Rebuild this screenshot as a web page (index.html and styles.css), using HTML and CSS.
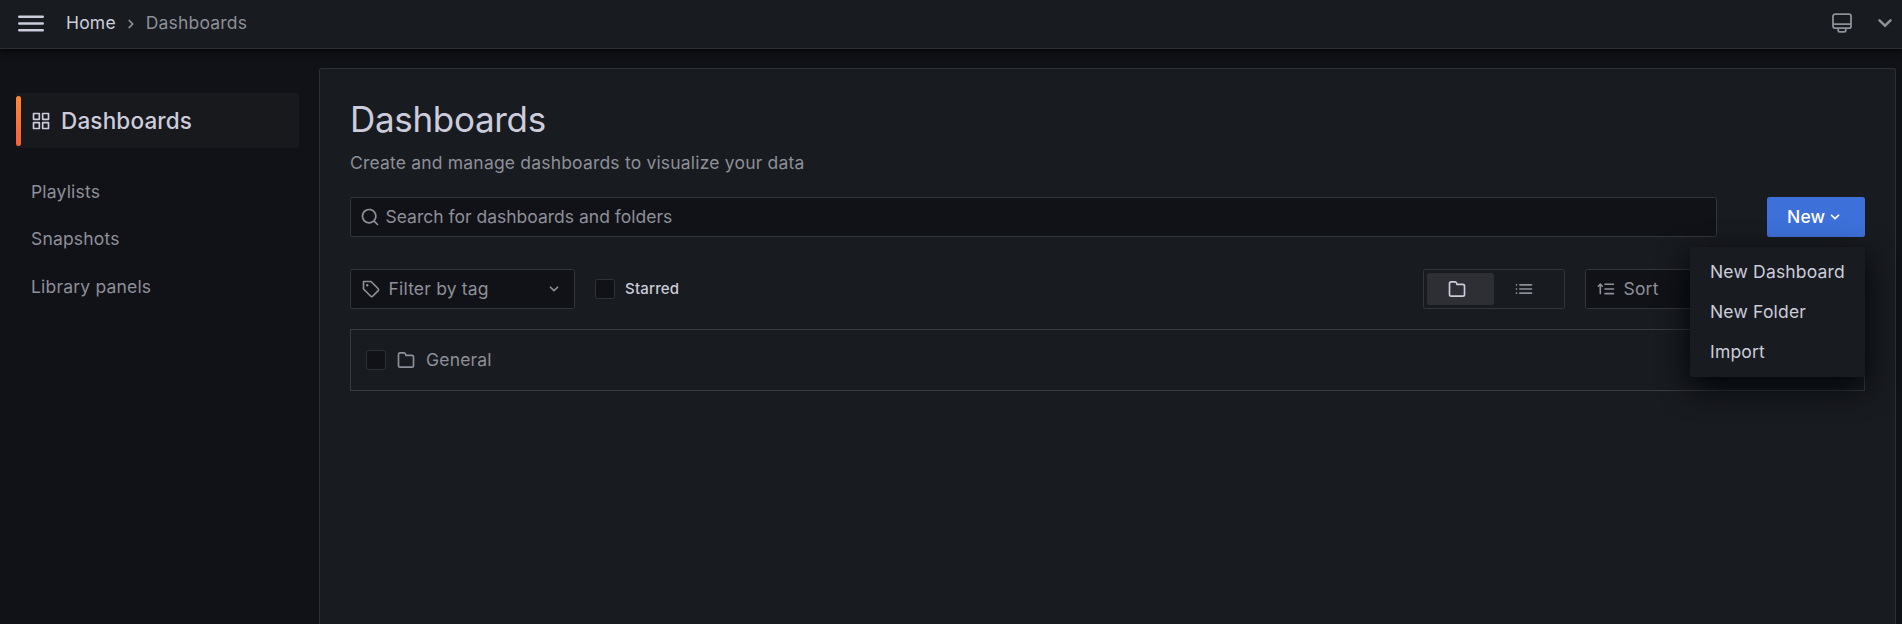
FILE: index.html
```html
<!DOCTYPE html>
<html lang="en">
<head>
<meta charset="utf-8">
<title>Dashboards</title>
<link rel="stylesheet" href="styles.css">
</head>
<body>
<svg class="sprite" aria-hidden="true">
  <symbol id="folder" viewBox="0 0 24 24"><path d="M19,5.5H12.72l-.32-1a3,3,0,0,0-2.84-2H5a3,3,0,0,0-3,3v13a3,3,0,0,0,3,3H19a3,3,0,0,0,3-3V8.5A3,3,0,0,0,19,5.5Zm1,13a1,1,0,0,1-1,1H5a1,1,0,0,1-1-1V5.5a1,1,0,0,1,1-1H9.56a1,1,0,0,1,.95.68l.54,1.64A1,1,0,0,0,12,7.5h7a1,1,0,0,1,1,1Z"/></symbol>
  <symbol id="angle-down" viewBox="0 0 24 24"><path d="M17,9.17a1,1,0,0,0-1.41,0L12,12.71,8.46,9.17a1,1,0,0,0-1.41,0,1,1,0,0,0,0,1.42l4.24,4.24a1,1,0,0,0,1.42,0L17,10.59A1,1,0,0,0,17,9.17Z"/></symbol>
</svg>
<header class="topbar">
  <svg class="menu-icon" viewBox="0 0 26 17"><path d="M1.2 1.8H24.8M1.2 8.5H24.8M1.2 15.2H24.8"/></svg>
  <nav class="crumbs">
    <a class="crumb-home">Home</a>
    <svg class="icon crumb-sep" viewBox="0 0 24 24"><path d="M14.83,11.29,10.59,7.05a1,1,0,0,0-1.42,0,1,1,0,0,0,0,1.41L12.71,12,9.17,15.54a1,1,0,0,0,0,1.41,1,1,0,0,0,.71.29,1,1,0,0,0,.71-.29l4.24-4.24A1,1,0,0,0,14.83,11.29Z"/></svg>
    <span>Dashboards</span>
  </nav>
  <div class="top-actions">
    <svg class="icon monitor" viewBox="0 0 20 20"><path d="M3 1.2h14a2 2 0 0 1 2 2v10a2 2 0 0 1-2 2H3a2 2 0 0 1-2-2v-10a2 2 0 0 1 2-2ZM1 11.2h18M6.2 15.2v2a1.600 1.600 0 0 0 1.600 1.600h4.400a1.600 1.600 0 0 0 1.600-1.600v-2"/></svg>
    <svg class="icon top-chevron" viewBox="0 0 14 10"><path d="M1.500 2.300L7 7.700L12.500 2.300"/></svg>
  </div>
</header>
<div class="body">
  <aside class="sidebar">
    <a class="side-active">
      <svg class="icon" viewBox="0 0 24 24"><path d="M10,13H3a1,1,0,0,0-1,1v7a1,1,0,0,0,1,1h7a1,1,0,0,0,1-1V14A1,1,0,0,0,10,13ZM9,20H4V15H9ZM21,2H14a1,1,0,0,0-1,1v7a1,1,0,0,0,1,1h7a1,1,0,0,0,1-1V3A1,1,0,0,0,21,2ZM20,9H15V4h5Zm1,4H14a1,1,0,0,0-1,1v7a1,1,0,0,0,1,1h7a1,1,0,0,0,1-1V14A1,1,0,0,0,21,13Zm-1,7H15V15h5ZM10,2H3A1,1,0,0,0,2,3v7a1,1,0,0,0,1,1h7a1,1,0,0,0,1-1V3A1,1,0,0,0,10,2ZM9,9H4V4H9Z"/></svg>
      <span>Dashboards</span>
    </a>
    <ul class="side-links">
      <li>Playlists</li>
      <li>Snapshots</li>
      <li>Library panels</li>
    </ul>
  </aside>
  <main class="panel">
    <h1>Dashboards</h1>
    <p class="subtitle">Create and manage dashboards to visualize your data</p>
    <div class="search-row">
      <div class="field search">
        <svg class="icon" viewBox="0 0 24 24"><path d="M21.71,20.29,18,16.61A9,9,0,1,0,16.61,18l3.68,3.68a1,1,0,0,0,1.42,0A1,1,0,0,0,21.71,20.29ZM11,18a7,7,0,1,1,7-7A7,7,0,0,1,11,18Z"/></svg>
        <span>Search for dashboards and folders</span>
      </div>
      <div class="new">
        <button class="new-button">New<svg class="icon"><use href="#angle-down"/></svg></button>
        <div class="menu">
          <div>New Dashboard</div>
          <div>New Folder</div>
          <div>Import</div>
        </div>
      </div>
    </div>
    <div class="filter-row">
      <div class="field tag-filter">
        <svg class="icon" viewBox="0 0 24 24"><path d="M7.5,6A1.5,1.5,0,1,0,9,7.5,1.5,1.5,0,0,0,7.5,6Zm13.62,4.71L12.71,2.290A1,1,0,0,0,12,2H3A1,1,0,0,0,2,3v9a1,1,0,0,0,.29.71l8.42,8.41a3,3,0,0,0,4.24,0L21.120,15a3,3,0,0,0,0-4.24Zm-1.41,2.82h0l-6.180,6.170a1,1,0,0,1-1.410,0L4,11.590V4h7.590l8.120,8.120a1,1,0,0,1,.29.710A1,1,0,0,1,19.710,13.530Z"/></svg>
        <span>Filter by tag</span>
        <svg class="icon field-chevron"><use href="#angle-down"/></svg>
      </div>
      <label class="starred"><span class="check"></span>Starred</label>
      <div class="view-toggle">
        <span class="view view-on"><svg class="icon"><use href="#folder"/></svg></span>
        <span class="view"><svg class="icon" viewBox="0 0 24 24"><path d="M3.710,16.290a1,1,0,0,0-1.420,0,1,1,0,1,0,1.420,0ZM7,8H21a1,1,0,0,0,0-2H7A1,1,0,0,0,7,8ZM3.710,11.290a1,1,0,1,0,0,1.420A1,1,0,0,0,3.710,11.290ZM21,11H7a1,1,0,0,0,0,2H21a1,1,0,0,0,0-2ZM3.710,6.290a1,1,0,1,0,0,1.420A1,1,0,0,0,3.710,6.290ZM21,16H7a1,1,0,0,0,0,2H21a1,1,0,0,0,0-2Z"/></svg></span>
      </div>
      <div class="field sort">
        <svg class="icon sort-icon" viewBox="0 0 20 20"><path d="M5.300 14.600V6M10 5.300H18.500M10 10H18.500M10 14.600H18.500"/><path d="M3.300 7.200L5.300 5.200L7.300 7.200"/></svg>
        <span>Sort</span>
      </div>
    </div>
    <div class="folder-row">
      <span class="check"></span>
      <svg class="icon"><use href="#folder"/></svg>
      <span>General</span>
    </div>
  </main>
</div>
</body>
</html>
```
FILE: styles.css
```css
* { box-sizing: border-box; }
body {
  margin: 0;
  height: 624px;
  overflow: hidden;
  display: flex;
  flex-direction: column;
  background: #111217;
  color: #8e8f99;
  font: 400 17.5px/28px Inter, "Liberation Sans", sans-serif;
  letter-spacing: 0.1875px;
}
.sprite { display: none; }
.icon { width: 20px; height: 20px; flex: none; fill: currentColor; }

.topbar {
  position: relative;
  z-index: 1;
  flex: none;
  height: 49px;
  display: flex;
  align-items: center;
  padding: 0 10px 2px 18px;
  background: #181b1f;
  border-bottom: 1px solid #2d2e34;
  box-shadow: 0 1px 6px 1px #050507;
}
.menu-icon { width: 26px; height: 17px; fill: none; stroke: #ccccdc; stroke-width: 2.4; stroke-linecap: round; }
.crumbs { display: flex; align-items: center; margin-left: 22px; }
.crumb-home { color: #ccccdc; }
.crumb-sep { margin: 2px 5px 0; }
.top-actions { display: flex; align-items: center; gap: 26px; margin-left: auto; }
.monitor { fill: none; stroke: currentColor; stroke-width: 1.8; }
.top-chevron { width: 14px; height: 10px; fill: none; stroke: currentColor; stroke-width: 2.5; stroke-linecap: round; }

.body { flex: 1; display: flex; padding-right: 6px; }
.sidebar { width: 319px; padding: 44px 20px 0 16px; }
.side-active {
  display: flex;
  align-items: center;
  height: 55px;
  border-radius: 2.5px;
  background: #18191d;
  color: #ccccdc;
  font-size: 22.5px;
  font-weight: 500;
  letter-spacing: 0.17px;
}
.side-active::before {
  content: "";
  width: 5px;
  height: 50px;
  border-radius: 2.5px;
  background: linear-gradient(#ff8833, #f55f3e);
}
.side-active .icon { margin: 0 10px; }
.side-links { list-style: none; margin: 19.5px 0 0; padding: 0 0 0 15px; }
.side-links li { height: 47.5px; line-height: 47px; }

.panel {
  flex: 1;
  margin-top: 19px;
  padding: 29px 30px 0;
  background: #181b1f;
  border: 1px solid #2d2f33;
  border-bottom: 0;
  border-radius: 2.5px 2.5px 0 0;
}
h1 { margin: 0; color: #ccccdc; font-size: 35px; line-height: 42px; font-weight: 400; letter-spacing: -0.3125px; }
.subtitle { margin: 9px 0 0; }
.search-row { display: flex; gap: 50px; margin-top: 19.5px; }
.field {
  height: 40px;
  display: flex;
  align-items: center;
  gap: 5px;
  padding: 0 9px;
  background: #111217;
  border: 1px solid #34363b;
  border-radius: 2.5px;
}
.search { flex: 1; gap: 5.5px; letter-spacing: 0; }
.new { position: relative; }
.new-button {
  width: 98px;
  height: 40px;
  display: flex;
  align-items: center;
  padding: 0 20px;
  border: 0;
  border-radius: 2.5px;
  background: #3d71d9;
  color: #fff;
  font: inherit;
  font-weight: 500;
  letter-spacing: inherit;
}
.menu {
  position: absolute;
  top: 50px;
  right: 0;
  width: 175px;
  padding: 5px 0;
  border-radius: 2.5px;
  background: #181b1f;
  box-shadow: 0 10px 30px #010409;
  color: #ccccdc;
}
.menu div { padding-left: 20px; line-height: 40px; }
.filter-row { display: flex; align-items: center; margin-top: 32px; }
.tag-filter { width: 225px; gap: 8px; padding: 0 10px; }
.tag-filter span { margin-left: -0.5px; }
.field-chevron { margin-left: auto; }
.starred { display: flex; align-items: center; gap: 10px; margin-left: 20px; color: #ccccdc; font-size: 15px; font-weight: 500; }
.check { width: 20px; height: 20px; background: #111217; border: 1px solid #303237; border-radius: 2.5px; }
.view-toggle {
  width: 142px;
  height: 40px;
  display: flex;
  margin-left: auto;
  padding: 3px;
  border: 1px solid #34363b;
  border-radius: 2.5px;
}
.view { width: 67px; display: flex; align-items: center; justify-content: center; padding: 1px 7px 0 0; border-radius: 2.5px; }
.view-on { background: #2d2f34; color: #ccccdc; }
.sort { width: 280px; margin-left: 20px; gap: 8.5px; }
.sort-icon { fill: none; stroke: currentColor; stroke-width: 1.6; stroke-linecap: round; }
.folder-row {
  height: 62px;
  display: flex;
  align-items: center;
  gap: 10px;
  margin-top: 20px;
  padding-left: 15px;
  border: 1px solid #3a3c41;
}
```
